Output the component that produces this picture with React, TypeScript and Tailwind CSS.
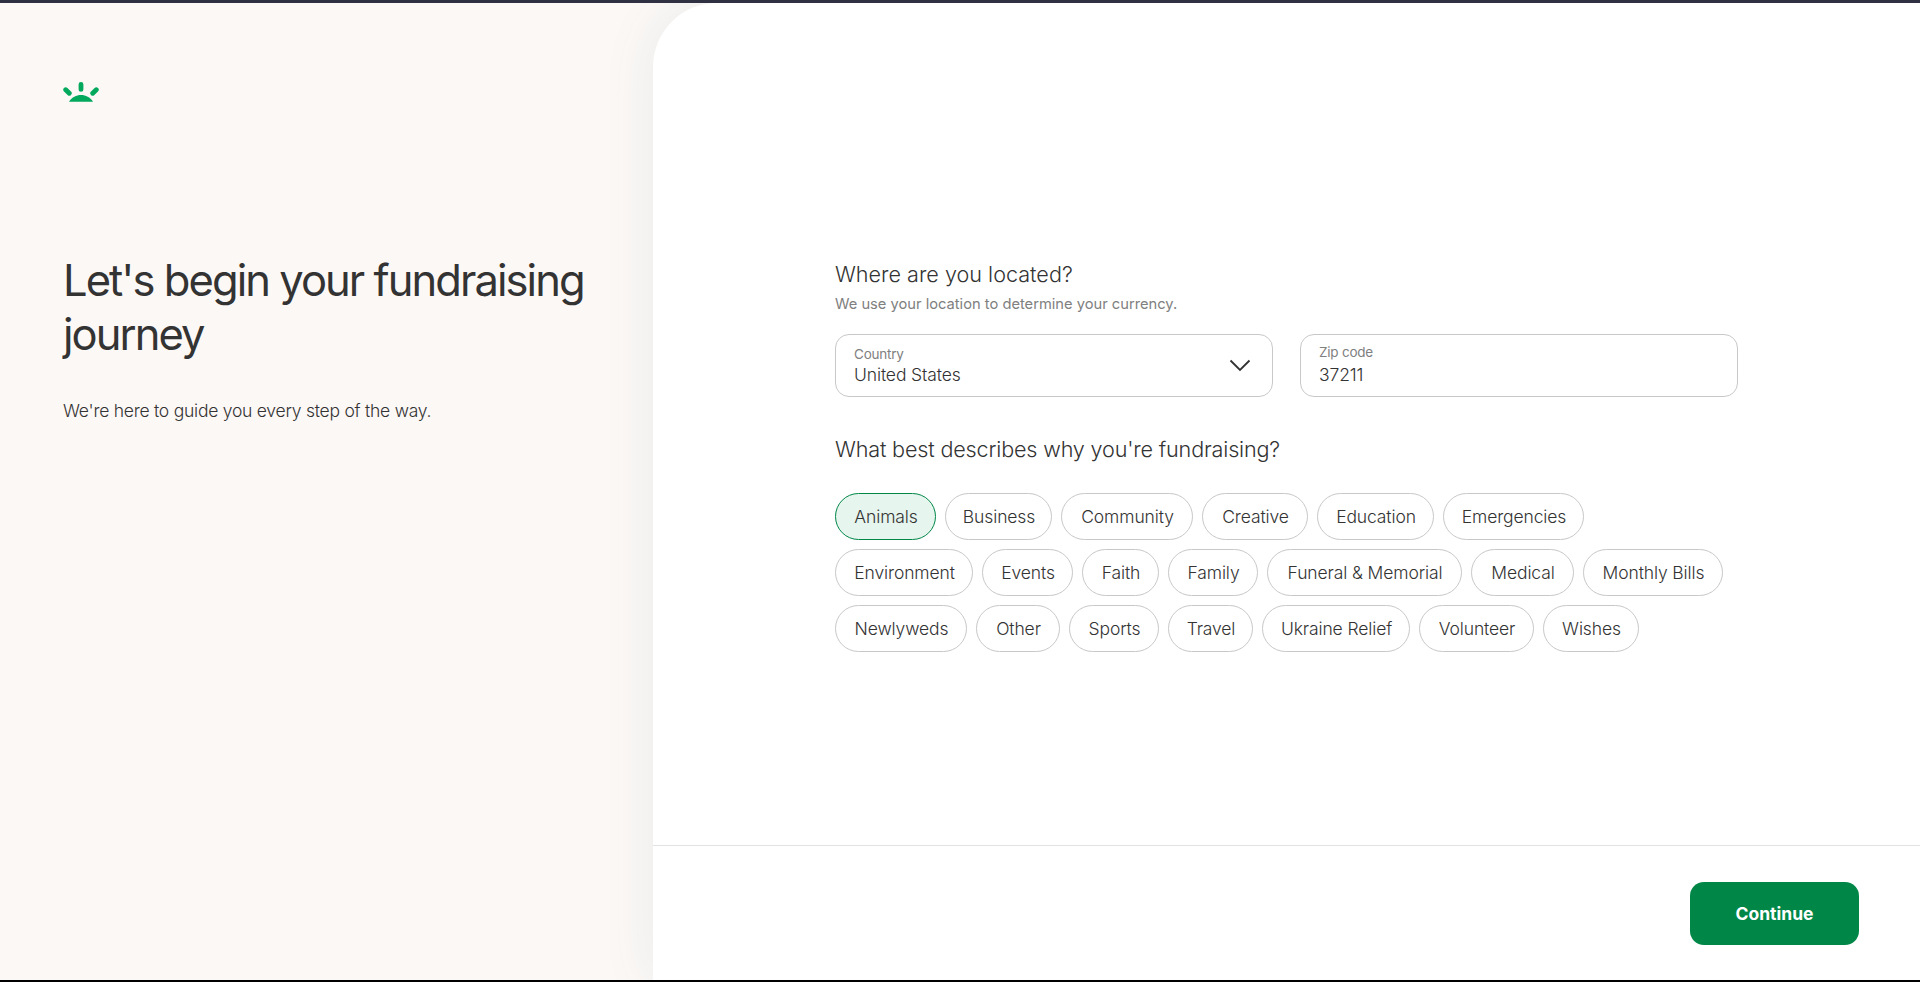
type Category = { label: string; width: string };

const rows: Category[][] = [
  [
    { label: "Animals", width: "w-[101px]" },
    { label: "Business", width: "w-[107px]" },
    { label: "Community", width: "w-[132px]" },
    { label: "Creative", width: "w-[106px]" },
    { label: "Education", width: "w-[117px]" },
    { label: "Emergencies", width: "w-[141px]" },
  ],
  [
    { label: "Environment", width: "w-[138px]" },
    { label: "Events", width: "w-[91px]" },
    { label: "Faith", width: "w-[77px]" },
    { label: "Family", width: "w-[90px]" },
    { label: "Funeral & Memorial", width: "w-[195px]" },
    { label: "Medical", width: "w-[103px]" },
    { label: "Monthly Bills", width: "w-[140px]" },
  ],
  [
    { label: "Newlyweds", width: "w-[132px]" },
    { label: "Other", width: "w-[84px]" },
    { label: "Sports", width: "w-[90px]" },
    { label: "Travel", width: "w-[85px]" },
    { label: "Ukraine Relief", width: "w-[148px]" },
    { label: "Volunteer", width: "w-[115px]" },
    { label: "Wishes", width: "w-[96px]" },
  ],
];

function Logo() {
  return (
    <svg width="38" height="22" viewBox="0 0 38 22" className="block">
      <g stroke="#02a95c" strokeWidth="4.8" strokeLinecap="round">
        <path d="M18 4.400v5M2.700 9.700l3.600 3.600M33.300 9.700l-3.600 3.600" />
      </g>
      <path d="M6 21.700C9 17.200 13.200 15 18 15s9 2.200 12 6.700z" fill="#02a95c" />
    </svg>
  );
}

function Pill({ label, width }: Category) {
  const selected = label === "Animals";
  return (
    <button
      className={`flex h-[47px] shrink-0 items-center justify-center whitespace-nowrap rounded-full border pt-[2px] pl-px text-[17.5px] tracking-[-0.12px] ${width} ${
        selected ? "border-[#008748] bg-[#e6f5ed]" : "border-[#c8c8c8] bg-white"
      }`}
    >
      {label}
    </button>
  );
}

export default function App() {
  return (
    <div className="flex h-[982px] w-[1920px] flex-col overflow-hidden bg-[#fcf8f6] font-['Inter',sans-serif] font-light text-[#333]">
      <div className="h-[3px] shrink-0 bg-[#2f3142]" />
      <div className="flex min-h-0 flex-1 overflow-hidden">
        <aside className="w-[653px] shrink-0 pl-[63px] pt-[77px]">
          <Logo />
          <h1 className="mt-[151px] whitespace-nowrap text-[43.5px] font-normal leading-[54px] tracking-[-1.94px]">
            Let's begin your fundraising
            <br />
            journey
          </h1>
          <p className="mt-[38px] text-[17.5px] leading-[24px] tracking-[-0.24px]">
            We're here to guide you every step of the way.
          </p>
        </aside>
        <main className="flex flex-1 flex-col rounded-tl-[64px] bg-white shadow-[0_0_54px_rgba(32,108,106,0.09)]">
          <section className="flex h-[843px] flex-col border-b border-[#e2e2e2] pl-[182px] pt-[257px]">
            <h2 className="text-[21.6px] leading-[28px]">Where are you located?</h2>
            <p className="mt-[5px] text-[14.7px] font-normal leading-[22px] text-[#808080]">
              We use your location to determine your currency.
            </p>
            <div className="mt-[19px] flex gap-[27px]">
              <div className="flex h-[63px] w-[438px] items-center justify-between rounded-[14px] border border-[#c8c8c8] pl-[18px] pr-[20px]">
                <div className="flex flex-col pb-px">
                  <span className="text-[13.5px] font-normal leading-[20px] tracking-[-0.22px] text-[#808080]">
                    Country
                  </span>
                  <span className="text-[17.5px] leading-[22px] tracking-[-0.12px]">United States</span>
                </div>
                <svg
                  width="24"
                  height="24"
                  viewBox="0 0 24 24"
                  fill="none"
                  stroke="#333"
                  strokeWidth="1.8"
                >
                  <path d="M2.500 6.500l9.500 9.500 9.500-9.500" />
                </svg>
              </div>
              <div className="flex h-[63px] w-[438px] flex-col rounded-[14px] border border-[#c8c8c8] pl-[18px] pt-[7px]">
                <span className="text-[13.5px] font-normal leading-[20px] tracking-[-0.22px] text-[#808080]">
                  Zip code
                </span>
                <span className="mt-[2px] text-[17.5px] leading-[22px] tracking-[-0.1px]">37211</span>
              </div>
            </div>
            <h2 className="mt-[38px] text-[21.6px] leading-[28px] tracking-[-0.17px]">
              What best describes why you're fundraising?
            </h2>
            <div className="mt-[30px] flex flex-col gap-[9px]">
              {rows.map((row) => (
                <div key={row[0].label} className="flex gap-[9px]">
                  {row.map((category) => (
                    <Pill key={category.label} {...category} />
                  ))}
                </div>
              ))}
            </div>
          </section>
          <footer className="flex justify-end pr-[61px] pt-[36px]">
            <button className="h-[63px] w-[169px] rounded-[14px] bg-[#008748] pt-[2px] text-[17.5px] font-bold text-white">
              Continue
            </button>
          </footer>
        </main>
      </div>
      <div className="h-[2px] shrink-0 bg-black" />
    </div>
  );
}
